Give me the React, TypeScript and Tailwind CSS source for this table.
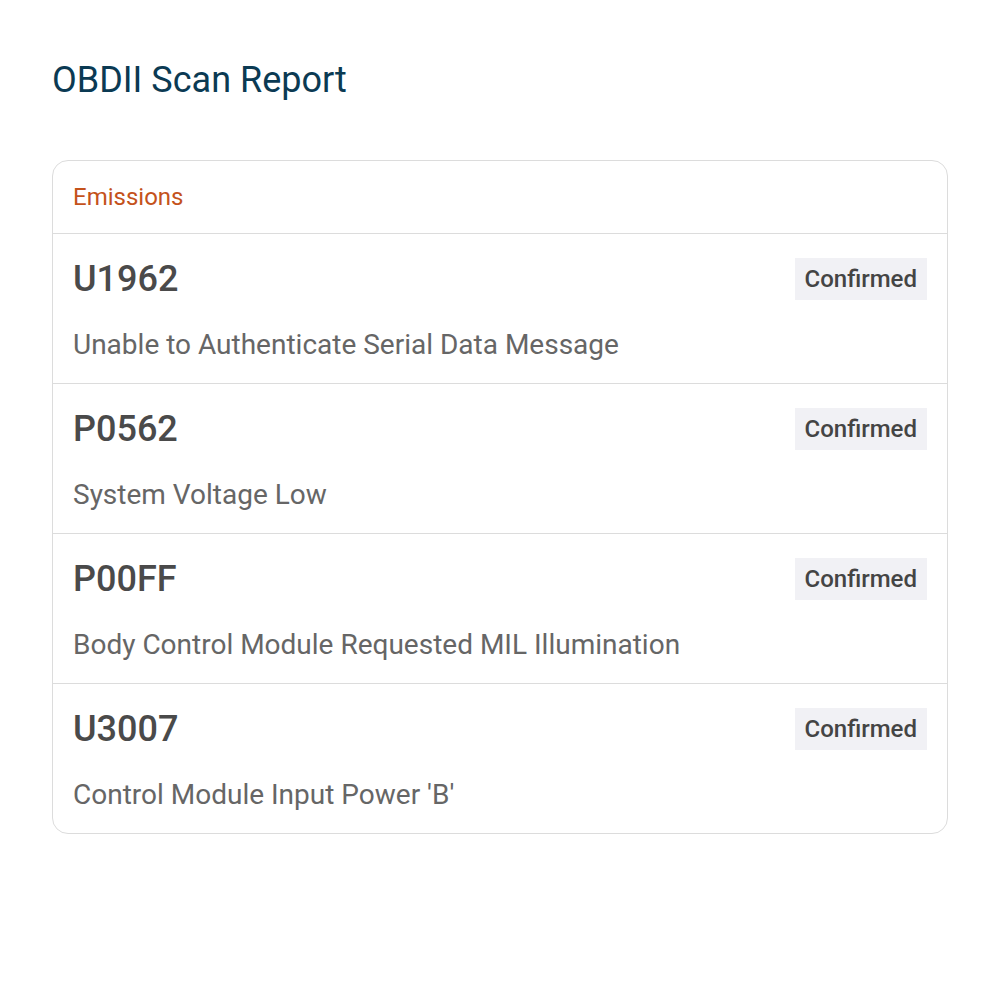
const codes = [
  { code: "U1962", desc: "Unable to Authenticate Serial Data Message" },
  { code: "P0562", desc: "System Voltage Low" },
  { code: "P00FF", desc: "Body Control Module Requested MIL Illumination" },
  { code: "U3007", desc: "Control Module Input Power 'B'" },
];

const App = () => {
  return (
    <div className="min-h-screen bg-white px-[52px] pt-[58px] font-['Roboto',sans-serif]">
      {/* Page title */}
      <h1 className="text-[36px] leading-[44px] text-[#0b3a53] font-normal">
        OBDII Scan Report
      </h1>

      {/* Trouble codes card */}
      <div className="mt-[58px] border border-[#dcdcdc] rounded-[16px] overflow-hidden">
        <div className="px-5 py-5 border-b border-[#dcdcdc]">
          <span className="text-[24px] leading-[32px] text-[#c4521b]">
            Emissions
          </span>
        </div>

        {codes.map((item, i) => (
          <div
            key={item.code}
            className={
              i < codes.length - 1
                ? "px-5 pt-6 pb-[22px] border-b border-[#dcdcdc]"
                : "px-5 pt-6 pb-[22px]"
            }
          >
            <div className="flex justify-between items-center h-[42px]">
              <span className="text-[36px] font-medium text-[#4a4a4a] leading-[42px]">
                {item.code}
              </span>
              <span className="h-[42px] px-[10px] flex items-center bg-[#f1f1f5] text-[24px] font-medium text-[#444444]">
                Confirmed
              </span>
            </div>
            <div className="mt-[29px] text-[28px] leading-[32px] text-[#666666]">
              {item.desc}
            </div>
          </div>
        ))}
      </div>
    </div>
  );
};

export default App;
